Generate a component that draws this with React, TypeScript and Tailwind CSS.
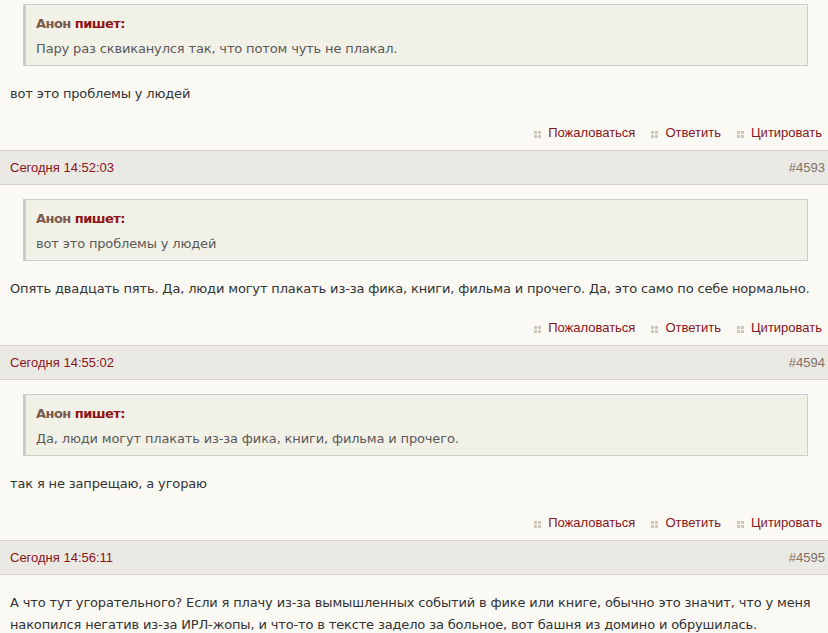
import React from 'react';

type Post = {
    time?: string;
    num?: string;
    quote?: string;
    text: string;
};

const posts: Post[] = [
    {
        quote: 'Пару раз сквиканулся так, что потом чуть не плакал.',
        text: 'вот это проблемы у людей',
    },
    {
        time: 'Сегодня 14:52:03',
        num: '#4593',
        quote: 'вот это проблемы у людей',
        text: 'Опять двадцать пять. Да, люди могут плакать из-за фика, книги, фильма и прочего. Да, это само по себе нормально.',
    },
    {
        time: 'Сегодня 14:55:02',
        num: '#4594',
        quote: 'Да, люди могут плакать из-за фика, книги, фильма и прочего.',
        text: 'так я не запрещаю, а угораю',
    },
    {
        time: 'Сегодня 14:56:11',
        num: '#4595',
        text: 'А что тут угорательного? Если я плачу из-за вымышленных событий в фике или книге, обычно это значит, что у меня накопился негатив из-за ИРЛ-жопы, и что-то в тексте задело за больное, вот башня из домино и обрушилась.',
    },
];

const Dots = () => (
    <svg width="7" height="7" viewBox="0 0 7 7" className="mt-[3px]">
        <rect x="0" y="0" width="3" height="3" fill="#cfc7b8" />
        <rect x="4" y="0" width="3" height="3" fill="#cfc7b8" />
        <rect x="0" y="4" width="3" height="3" fill="#cfc7b8" />
        <rect x="4" y="4" width="3" height="3" fill="#cfc7b8" />
    </svg>
);

const ActionLink = ({ label }: { label: string }) => (
    <span className="flex items-center gap-[7px]">
        <Dots />
        <span className="text-[#861621] cursor-pointer">{label}</span>
    </span>
);

const PostBlock = ({ post }: { post: Post }) => {
    return (
        <div>
            {post.time && (
                <div className="h-[35px] flex items-center justify-between pl-[10px] pr-[3px] bg-[#ebe9e4] border-t border-b border-[#d9d1c5] font-['Liberation_Sans',sans-serif] text-[13px]">
                    <span className="text-[#8a1219]">{post.time}</span>
                    <span className="text-[#7f6f66]">{post.num}</span>
                </div>
            )}

            <div className={post.time ? 'pt-[14px]' : 'pt-[4px]'}>
                {post.quote && (
                    <div className="ml-[23px] mr-[20px] mb-[17px] h-[62px] bg-[#f2f1e7] border border-[#cccccc] border-l-[3px] pl-[10px] pt-[10px]">
                        <div className="font-bold leading-[18px] text-[13px] tracking-[-0.55px]">
                            <span className="text-[#7b5a4a]">Анон </span>
                            <span className="text-[#8e1414]">пишет:</span>
                        </div>
                        <div className="mt-[7px] leading-[18px] text-[13px] tracking-[-0.15px] text-[#595959]">{post.quote}</div>
                    </div>
                )}
                {post.quote ? (
                    <p className="px-[10px] leading-[22px] text-[13px] tracking-[-0.15px] text-[#333333]">{post.text}</p>
                ) : (
                    <p className="pt-[3px] pl-[10px] pr-[6px] leading-[22px] text-[13px] tracking-[-0.15px] text-[#333333]">{post.text}</p>
                )}
            </div>

            {post.quote && (
                <div className="mt-[17px] mb-[6px] h-[22px] flex items-center justify-end gap-[16px] pr-[6px] font-['Liberation_Sans',sans-serif] text-[13px]">
                    <ActionLink label="Пожаловаться" />
                    <ActionLink label="Ответить" />
                    <ActionLink label="Цитировать" />
                </div>
            )}
        </div>
    );
};

export default function App() {
    return (
        <div className="w-[828px] h-[633px] overflow-hidden bg-[#faf9f4] font-['DejaVu_Sans',Verdana,sans-serif]">
            {posts.map((p, i) => (
                <PostBlock key={i} post={p} />
            ))}
        </div>
    );
}
